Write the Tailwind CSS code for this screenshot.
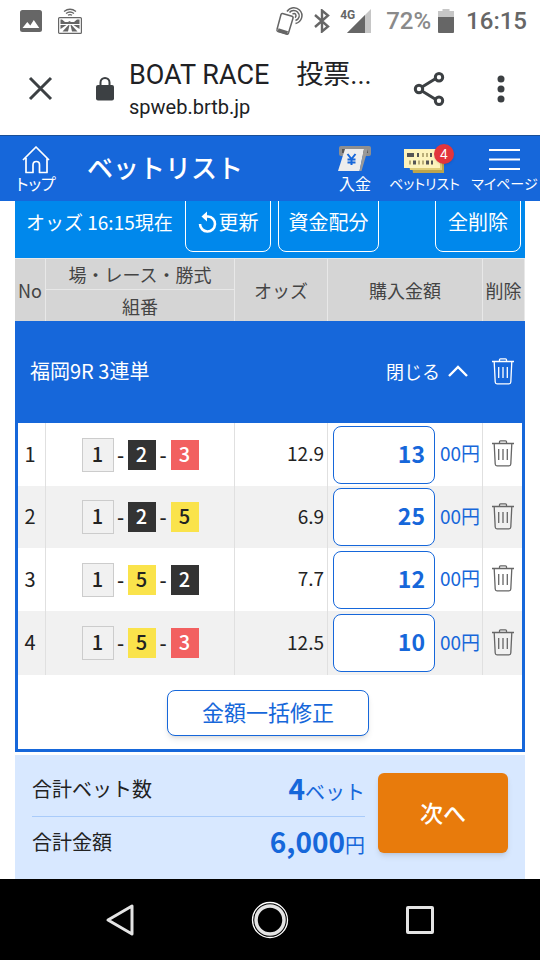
<!DOCTYPE html>
<html lang="ja">
<head>
<meta charset="utf-8">
<meta name="viewport" content="width=device-width, initial-scale=1">
<title>BOAT RACE 投票サイト</title>
<script src="https://cdn.jsdelivr.net/npm/@tailwindcss/browser@4"></script>
</head>
<body class="flex min-h-screen flex-col bg-white font-['Noto_Sans_CJK_JP',sans-serif] text-[#222]">
<svg class="hidden" aria-hidden="true">
  <symbol id="trash" viewBox="0 0 22 27"><g fill="none" stroke="currentColor" stroke-width="1.3"><path d="M0 3.500h22M7.500 3.200V1.800q0-1 1-1h5q1 0 1 1v1.400M2.200 3.800l1 20.200q.1 1.800 1.800 1.800h12q1.700 0 1.800-1.800l1-20.200"/><path d="M6.700 9v11M11 9v11M15.300 9v11"/></g></symbol>
</svg>

<!-- Status bar -->
<div class="flex h-[42px] items-center pl-5 pr-[13px] font-['Roboto',sans-serif] text-[#666]">
  <svg class="size-[22px]" viewBox="0 0 22 22"><rect width="22" height="22" rx="2.500" fill="#666"/><path d="M2.500 18l4.800-6 3 3.500 3.500-5.500 5.500 8z" fill="#fff"/></svg>
  <svg class="ml-4 h-[26px] w-6" viewBox="0 0 24 26"><g fill="none" stroke="#666" stroke-width="1.300"><path d="M6 3.500q6-4.500 12 0M8 5.500q4-3 8 0M10 7.300q2-1.500 4 0"/></g><rect x=".6" y="9.600" width="22.800" height="15.800" rx="1" fill="#fff" stroke="#666" stroke-width="1.200"/><path d="M2.500 11.500h1.500l3 2.500h3l1.500-1 1.500 1h3l3-2.500h2.500V16h-19zM2.500 17h6l-6 4zM21.500 17h-6l6 4zM10.500 17h1l-1.500 6.500H4.500zM12.500 17h1l6 6.500H14z" fill="#666"/></svg>
  <svg class="ml-auto h-[30px] w-[30px]" viewBox="0 0 30 30"><g fill="none" stroke="#666"><path d="M7.500 7.500l9.500 2.800q1.500.5 1 2L13.500 27q-.5 1.500-2 1L3 25.500q-1.500-.5-1-2L6 8.500q.4-1.300 1.500-1z" stroke-width="1.500"/><path d="M3 24l9.500 3" stroke-width="3.500"/><path d="M12 5.500c3-4.500 9-5 12.500-1.500 4.500 4.500 2.500 12-4 13.500M14.500 6.500c2-2.500 6-2.500 8-.5 3 3 2 7-2 8.500M17.500 8c3-1.500 4.500 1.500 2.700 3.700" stroke-width="1.500"/></g></svg>
  <svg class="ml-[9px] h-6 w-4" viewBox="0 0 16 24"><path d="M1 6l13 11.500L8 22.500v-21L14 6.500 1 18" fill="none" stroke="#666" stroke-width="2.400"/></svg>
  <div class="relative ml-[10px] h-6 w-[31px]">
    <svg class="h-6 w-[31px]" viewBox="0 0 31 24"><path d="M31 0v24H7z" fill="#c6c6c6"/><path d="M25 6v18H7z" fill="#666"/></svg>
    <span class="absolute top-0 left-0 text-xs leading-3 font-bold">4G</span>
  </div>
  <span class="ml-[15px] text-2xl leading-6 font-medium text-[#8a8a8a]">72%</span>
  <svg class="ml-[7px] h-[26px] w-4" viewBox="0 0 16 26"><path d="M4.500 1h7v2H16v7H0V3h4.500z" fill="#c6c6c6"/><path d="M0 9h16v15q0 1-1 1H1q-1 0-1-1z" fill="#666"/></svg>
  <span class="ml-3 text-2xl leading-6 font-medium">16:15</span>
</div>

<!-- Browser bar -->
<div class="flex h-[93px] items-center pl-7 pr-8 text-[#3c4043]">
  <button aria-label="閉じる" class="size-[25px]"><svg class="size-[25px]" viewBox="0 0 25 25"><path d="M2 2l21 21M23 2L2 23" stroke="currentColor" stroke-width="3"/></svg></button>
  <svg class="ml-[42px] h-6 w-5" viewBox="0 0 20 24"><rect x="1" y="8" width="18" height="15.500" rx="2" fill="currentColor"/><path d="M5.500 9V5.500a4.500 4.500 0 0 1 9 0V9" fill="none" stroke="currentColor" stroke-width="2"/></svg>
  <div class="ml-[14px] flex-1 pt-1 font-['Roboto','Noto_Sans_CJK_JP',sans-serif] text-[#202124]">
    <p class="text-[27px] leading-8 whitespace-nowrap">BOAT RACE　投票...</p>
    <p class="text-xl leading-8">spweb.brtb.jp</p>
  </div>
  <button aria-label="共有" class="h-[34px] w-8"><svg class="h-[34px] w-8" viewBox="0 0 32 34"><g fill="none" stroke="currentColor" stroke-width="3"><path d="M9 15l13-8M9 19l13 8"/><circle cx="6" cy="17" r="3.700"/><circle cx="26" cy="5.300" r="3.700"/><circle cx="26" cy="28.700" r="3.700"/></g></svg></button>
  <button aria-label="メニュー" class="ml-[49px] h-7 w-[14px]"><svg class="h-7 w-[14px]" viewBox="0 0 14 28" fill="currentColor"><circle cx="7" cy="4" r="3.500"/><circle cx="7" cy="14" r="3.500"/><circle cx="7" cy="24" r="3.500"/></svg></button>
</div>

<!-- Site header -->
<header class="flex h-[66px] items-center border-t border-[#1a4f96] bg-[#1667da] text-white">
  <a href="#top" class="flex w-[72px] flex-col items-center [font-feature-settings:'palt']">
    <svg class="h-[29px] w-7" viewBox="0 0 28 29"><g fill="none" stroke="currentColor" stroke-width="1.700" stroke-linejoin="round"><path d="M1 15L14 2l13 13M4 13v14.500h7V20q0-3.500 3.300-3.500T17.500 20v7.500H25V13"/></g></svg>
    <span class="text-base leading-[18px] whitespace-nowrap">トップ</span>
  </a>
  <h1 class="ml-[15px] pb-1 text-[26px] leading-8 font-medium">ベットリスト</h1>
  <nav class="ml-auto flex [font-feature-settings:'palt']">
    <a href="#deposit" class="flex w-[68px] flex-col items-center">
      <svg class="h-[29px] w-[34px]" viewBox="0 0 34 29"><rect x="1" y="1" width="32" height="10" rx="2" fill="#8f8f8f"/><rect x="4" y="4" width="26" height="4" fill="#555"/><path d="M7 4h19l-4.500 22H0z" fill="#ededed"/><path d="M26 4h4l-6.500 22h-2z" fill="#999"/><path d="M9.500 9l4 5 4-5M13.500 14v6M9.500 14.500h8M9.500 17.500h8" fill="none" stroke="#1667da" stroke-width="2"/></svg>
      <span class="text-base leading-[18px] whitespace-nowrap">入金</span>
    </a>
    <a href="#betlist" class="relative flex w-[71px] flex-col items-center">
      <svg class="h-[29px] w-[42px]" viewBox="0 0 42 29"><path d="M6 8h34v20H9z" fill="#bda54c"/><path d="M3 6h35v19H6z" fill="#e0cd78"/><path d="M0 4h36v19H0z" fill="#fdf3bc"/><path d="M3 8h7v4H3zM13 8h2v4h-2zM26 8h2v4h-2zM9 15.500h3v4H9zM22 15.500h3v4h-3zM27 15.500h2v4h-2z" fill="#555"/><path d="M18 8h2v4h-2zM22 8h2v4h-2zM5 15.500h2v4H5zM14 15.500h2v4h-2zM18 15.500h2v4h-2z" fill="#b9ad78"/></svg>
      <span class="text-sm leading-[18px] whitespace-nowrap">ベットリスト</span>
      <span class="absolute -top-px right-[6px] flex size-5 items-center justify-center rounded-full bg-[#e2353c] font-['Liberation_Sans',sans-serif] text-sm leading-5 shadow-sm">4</span>
    </a>
    <a href="#mypage" class="ml-[9px] flex w-[71px] flex-col items-center">
      <svg class="h-[29px] w-[31px]" viewBox="0 0 31 29"><path d="M0 5h31M0 14.500h31M0 24h31" stroke="currentColor" stroke-width="2"/></svg>
      <span class="text-sm leading-[18px] whitespace-nowrap">マイページ</span>
    </a>
  </nav>
</header>

<main class="mx-[15px] flex flex-1 flex-col">
  <!-- Toolbar, its buttons scrolled partly under the header -->
  <div class="flex h-[57px] items-end overflow-hidden bg-[#0088ec] pr-1 pb-[6px] pl-[11px] text-xl text-white">
    <p class="flex h-[60px] w-[159px] shrink-0 items-center text-[19px] whitespace-nowrap">オッズ 16:15現在</p>
    <button class="flex h-[60px] w-[86px] items-center justify-center gap-px rounded-lg border border-white">
      <svg class="h-[22px] w-5" viewBox="0 0 20 22"><path d="M6 5.500h4a7.500 7.500 0 1 1-8 7.500" fill="none" stroke="currentColor" stroke-width="2.600"/><path d="M9 .5v10L3.500 5.500z" fill="currentColor"/></svg>更新</button>
    <button class="ml-[7px] h-[60px] w-[101px] rounded-lg border border-white">資金配分</button>
    <button class="ml-auto h-[60px] w-[86px] rounded-lg border border-white">全削除</button>
  </div>

  <table class="w-full table-fixed border-separate border-spacing-0 text-center">
    <colgroup><col class="w-[31px]"><col><col class="w-[93px]"><col class="w-[155px]"><col class="w-[42px]"></colgroup>
    <thead class="bg-[#d5d5d5] text-lg leading-[28px] text-[#444]">
      <tr class="h-8">
        <th scope="col" rowspan="2" class="border-t border-r border-[#e8e8e8] p-0 font-normal">No</th>
        <th scope="col" class="border-t border-r border-b border-[#e8e8e8] p-0 font-normal">場・レース・勝式</th>
        <th scope="col" rowspan="2" class="border-t border-r border-[#e8e8e8] p-0 font-normal">オッズ</th>
        <th scope="col" rowspan="2" class="border-t border-r border-[#e8e8e8] p-0 font-normal">購入金額</th>
        <th scope="col" rowspan="2" class="border-t border-r border-[#e8e8e8] p-0 font-normal">削除</th>
      </tr>
      <tr class="h-[31px]"><th scope="col" class="border-r border-[#e8e8e8] p-0 font-normal">組番</th></tr>
    </thead>
    <tbody class="text-xl">
      <tr class="h-[102px] bg-[#1667da] text-white">
        <th colspan="5" scope="colgroup" class="p-0 pb-[2px] font-normal">
          <div class="flex items-center pr-[11px] pl-[15px]">
            <span>福岡9R 3連単</span>
            <button class="ml-auto flex items-center gap-2 text-lg">閉じる<svg class="h-3 w-5" viewBox="0 0 20 12"><path d="M1 11l9-9 9 9" fill="none" stroke="currentColor" stroke-width="2.400"/></svg></button>
            <button aria-label="福岡9R 3連単を削除" class="ml-6"><svg class="h-[27px] w-[22px]"><use href="#trash"/></svg></button>
          </div>
        </th>
      </tr>
      <tr class="h-[63px]">
        <td class="border-r border-l-3 border-r-[#e0e0e0] border-l-[#1667da] p-0 pb-[2px] pr-[3px]">1</td>
        <td class="border-r border-[#e0e0e0] p-0"><div class="flex items-center justify-center font-medium"><span class="flex h-[34px] w-8 items-center justify-center border border-[#ccc] bg-[#f1f1f1] pb-[2px]">1</span><span class="w-[14px]">-</span><span class="flex h-[30px] w-7 items-center justify-center bg-[#333] pb-[2px] text-white">2</span><span class="w-[15px]">-</span><span class="flex h-[30px] w-7 items-center justify-center bg-[#f26060] pb-[2px] text-white">3</span></div></td>
        <td class="border-r border-[#e0e0e0] pt-0 pr-[3px] pb-[2px] pl-0 text-right text-[19px]">12.9</td>
        <td class="border-r border-[#e0e0e0] p-0"><label class="flex items-center gap-[5px] pl-[5px] text-[19px] text-[#1667da]"><input type="text" inputmode="numeric" value="13" aria-label="1 購入金額（百円）" class="h-[58px] w-[102px] rounded-lg border border-[#1667da] bg-white px-[9px] pb-[4px] text-right text-[23px] font-bold"><span class="pb-[2px]">00円</span></label></td>
        <td class="border-r-3 border-[#1667da] p-0 pb-[2px]"><button aria-label="1を削除" class="block pl-[9px] text-[#666]"><svg class="h-[27px] w-[22px]"><use href="#trash"/></svg></button></td>
      </tr>
      <tr class="h-[62px] bg-[#f1f1f1]">
        <td class="border-r border-l-3 border-r-[#e0e0e0] border-l-[#1667da] p-0 pb-[2px] pr-[3px]">2</td>
        <td class="border-r border-[#e0e0e0] p-0"><div class="flex items-center justify-center font-medium"><span class="flex h-[34px] w-8 items-center justify-center border border-[#ccc] bg-[#f1f1f1] pb-[2px]">1</span><span class="w-[14px]">-</span><span class="flex h-[30px] w-7 items-center justify-center bg-[#333] pb-[2px] text-white">2</span><span class="w-[15px]">-</span><span class="flex h-[30px] w-7 items-center justify-center bg-[#fae34b] pb-[2px]">5</span></div></td>
        <td class="border-r border-[#e0e0e0] pt-0 pr-[3px] pb-[2px] pl-0 text-right text-[19px]">6.9</td>
        <td class="border-r border-[#e0e0e0] p-0"><label class="flex items-center gap-[5px] pl-[5px] text-[19px] text-[#1667da]"><input type="text" inputmode="numeric" value="25" aria-label="2 購入金額（百円）" class="h-[58px] w-[102px] rounded-lg border border-[#1667da] bg-white px-[9px] pb-[4px] text-right text-[23px] font-bold"><span class="pb-[2px]">00円</span></label></td>
        <td class="border-r-3 border-[#1667da] p-0 pb-[2px]"><button aria-label="2を削除" class="block pl-[9px] text-[#666]"><svg class="h-[27px] w-[22px]"><use href="#trash"/></svg></button></td>
      </tr>
      <tr class="h-[63px]">
        <td class="border-r border-l-3 border-r-[#e0e0e0] border-l-[#1667da] p-0 pb-[2px] pr-[3px]">3</td>
        <td class="border-r border-[#e0e0e0] p-0"><div class="flex items-center justify-center font-medium"><span class="flex h-[34px] w-8 items-center justify-center border border-[#ccc] bg-[#f1f1f1] pb-[2px]">1</span><span class="w-[14px]">-</span><span class="flex h-[30px] w-7 items-center justify-center bg-[#fae34b] pb-[2px]">5</span><span class="w-[15px]">-</span><span class="flex h-[30px] w-7 items-center justify-center bg-[#333] pb-[2px] text-white">2</span></div></td>
        <td class="border-r border-[#e0e0e0] pt-0 pr-[3px] pb-[2px] pl-0 text-right text-[19px]">7.7</td>
        <td class="border-r border-[#e0e0e0] p-0"><label class="flex items-center gap-[5px] pl-[5px] text-[19px] text-[#1667da]"><input type="text" inputmode="numeric" value="12" aria-label="3 購入金額（百円）" class="h-[58px] w-[102px] rounded-lg border border-[#1667da] bg-white px-[9px] pb-[4px] text-right text-[23px] font-bold"><span class="pb-[2px]">00円</span></label></td>
        <td class="border-r-3 border-[#1667da] p-0 pb-[2px]"><button aria-label="3を削除" class="block pl-[9px] text-[#666]"><svg class="h-[27px] w-[22px]"><use href="#trash"/></svg></button></td>
      </tr>
      <tr class="h-16 bg-[#f1f1f1]">
        <td class="border-r border-l-3 border-r-[#e0e0e0] border-l-[#1667da] p-0 pb-[2px] pr-[3px]">4</td>
        <td class="border-r border-[#e0e0e0] p-0"><div class="flex items-center justify-center font-medium"><span class="flex h-[34px] w-8 items-center justify-center border border-[#ccc] bg-[#f1f1f1] pb-[2px]">1</span><span class="w-[14px]">-</span><span class="flex h-[30px] w-7 items-center justify-center bg-[#fae34b] pb-[2px]">5</span><span class="w-[15px]">-</span><span class="flex h-[30px] w-7 items-center justify-center bg-[#f26060] pb-[2px] text-white">3</span></div></td>
        <td class="border-r border-[#e0e0e0] pt-0 pr-[3px] pb-[2px] pl-0 text-right text-[19px]">12.5</td>
        <td class="border-r border-[#e0e0e0] p-0"><label class="flex items-center gap-[5px] pl-[5px] text-[19px] text-[#1667da]"><input type="text" inputmode="numeric" value="10" aria-label="4 購入金額（百円）" class="h-[58px] w-[102px] rounded-lg border border-[#1667da] bg-white px-[9px] pb-[4px] text-right text-[23px] font-bold"><span class="pb-[2px]">00円</span></label></td>
        <td class="border-r-3 border-[#1667da] p-0 pb-[2px]"><button aria-label="4を削除" class="block pl-[9px] text-[#666]"><svg class="h-[27px] w-[22px]"><use href="#trash"/></svg></button></td>
      </tr>
    </tbody>
  </table>
  <div class="flex h-[77px] items-center justify-center border-x-3 border-b-3 border-[#1667da] pt-[2px] pr-1">
    <button class="h-[46px] w-[202px] rounded-lg border border-[#1667da] bg-white pb-1 text-[22px] leading-8 text-[#1667da] shadow-md">金額一括修正</button>
  </div>

  <!-- Totals -->
  <section class="mt-[3px] flex flex-1 items-start bg-[#d8e8ff] pt-[18px] pr-[17px] pl-[17px] text-xl">
    <dl class="flex-1">
      <div class="flex h-11 items-center justify-between border-b border-[#a9cbfa] pb-[11px]"><dt>合計ベット数</dt><dd class="flex items-baseline text-[#1667da]"><b class="text-[28px] leading-8">4</b>ベット</dd></div>
      <div class="flex h-[50px] items-center justify-between"><dt>合計金額</dt><dd class="flex items-baseline text-[#1667da]"><b class="text-[28px] leading-8">6,000</b>円</dd></div>
    </dl>
    <button class="ml-[13px] h-20 w-[130px] rounded-md bg-[#e87b0c] pb-[2px] text-[23px] font-medium text-white shadow-md">次へ</button>
  </section>
</main>

<!-- System navigation -->
<nav class="flex h-[81px] items-center justify-center gap-[112px] bg-black">
  <button aria-label="戻る"><svg class="size-[38px]" viewBox="0 0 38 38"><path d="M31 5v28L7 19z" fill="none" stroke="#e4e4e4" stroke-width="3" stroke-linejoin="round"/></svg></button>
  <button aria-label="ホーム"><svg class="size-[38px]" viewBox="0 0 38 38"><circle cx="19" cy="19" r="17.500" fill="none" stroke="#fff" stroke-width="1.300"/><circle cx="19" cy="19" r="14" fill="none" stroke="#e4e4e4" stroke-width="3.500"/></svg></button>
  <button aria-label="アプリ履歴"><svg class="size-[38px]" viewBox="0 0 38 38"><rect x="6.500" y="6.500" width="25" height="25" rx=".5" fill="none" stroke="#e4e4e4" stroke-width="3"/></svg></button>
</nav>
</body>
</html>
